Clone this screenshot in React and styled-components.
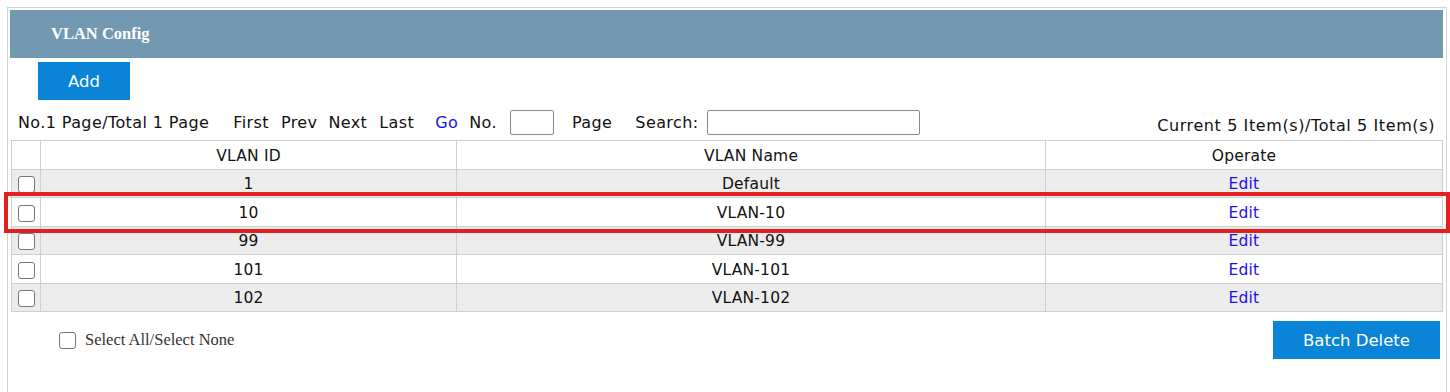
import React from "react";
import styled, { createGlobalStyle } from "styled-components";

const GlobalStyle = createGlobalStyle`
  html, body {
    margin: 0;
    padding: 0;
    background: #ffffff;
    font-family: "DejaVu Sans", Verdana, sans-serif;
  }
`;

const Page = styled.div`
  position: relative;
  width: 1450px;
  height: 392px;
  overflow: hidden;
`;

const Frame = styled.div`
  margin: 7px 0 0 7px;
  width: 1436px;
  height: 400px;
  border: 1px solid #d4d4d4;
  padding: 2px 0 0 2px;
  box-sizing: content-box;
`;

const TitleBar = styled.div`
  height: 48px;
  width: 1433px;
  background-color: #7298b2;
  display: flex;
  align-items: center;
  padding-left: 41px;
  box-sizing: border-box;
`;

const Title = styled.h2`
  margin: 0;
  font-family: "Liberation Serif", "Times New Roman", serif;
  font-size: 16.5px;
  font-weight: 700;
  color: #ffffff;
`;

const BlueButton = styled.button`
  width: ${(p) => p.$w}px;
  height: 38px;
  border: none;
  border-radius: 0;
  background-color: #0a84d6;
  color: #ffffff;
  font-family: "DejaVu Sans", Verdana, sans-serif;
  font-size: 16.5px;
  cursor: pointer;
  padding: 0;
`;

const AddRow = styled.div`
  padding: 4px 0 0 28px;
  display: flex;
`;

const Pager = styled.div`
  height: 40px;
  display: flex;
  align-items: center;
  justify-content: space-between;
  padding: 5px 8px 0 8px;
  width: 1433px;
  box-sizing: border-box;
  font-size: 16px;
  color: #111;
`;

const PagerLeft = styled.div`
  display: flex;
  align-items: center;
`;

const Item = styled.span`
  margin-left: ${(p) => p.$ml || 0}px;
  color: ${(p) => (p.$link ? "#1414e6" : "#111")};
  letter-spacing: 0.4px;
  white-space: nowrap;
`;

const TextBox = styled.input`
  margin-left: ${(p) => p.$ml || 0}px;
  width: ${(p) => p.$w}px;
  height: 25px;
  box-sizing: border-box;
  border: 1px solid #8a8a8a;
  border-radius: 2px;
  padding: 0 4px;
  font-size: 14px;
`;

const Counter = styled.span`
  margin-top: 5px;
  letter-spacing: 0.6px;
  white-space: nowrap;
`;

const Table = styled.table`
  margin-left: 1px;
  width: 1431px;
  border-collapse: collapse;
  table-layout: fixed;
  font-size: 15.5px;
  letter-spacing: 0.2px;
  color: #111;
`;

const Row = styled.tr`
  height: 28.5px;
  background-color: ${(p) => (p.$shade ? "#ececec" : "#ffffff")};
`;

const Cell = styled.td`
  border: 1px solid #cfcfcf;
  text-align: center;
  padding: 2px 0 0 0;
  vertical-align: middle;
  line-height: 18px;
`;

const HeadCell = styled(Cell).attrs({ as: "th" })`
  font-weight: 400;
`;

const EditLink = styled.a`
  color: #1f10e8;
  text-decoration: none;
  cursor: pointer;
`;

const Check = styled.input.attrs({ type: "checkbox" })`
  appearance: none;
  -webkit-appearance: none;
  width: 17px;
  height: 17px;
  margin: 0;
  border: 1.5px solid #777;
  border-radius: 3px;
  background: #fff;
  vertical-align: middle;
  display: inline-block;
`;

const Footer = styled.div`
  display: flex;
  justify-content: space-between;
  align-items: flex-start;
  width: 1433px;
  padding-right: 3px;
  box-sizing: border-box;
`;

const SelectAll = styled.label`
  margin: 18px 0 0 49px;
  display: flex;
  align-items: center;
  gap: 9px;
  font-family: "Liberation Serif", "Times New Roman", serif;
  font-size: 16.5px;
  color: #333;
`;

const FooterButtonWrap = styled.div`
  margin-top: 9px;
`;

const Highlight = styled.div`
  position: absolute;
  left: 4px;
  top: 192px;
  width: 1446px;
  height: 41px;
  border: 4px solid #e3201f;
  box-sizing: border-box;
  pointer-events: none;
`;

const rows = [
  { id: "1", name: "Default" },
  { id: "10", name: "VLAN-10" },
  { id: "99", name: "VLAN-99" },
  { id: "101", name: "VLAN-101" },
  { id: "102", name: "VLAN-102" },
];

export default function App() {
  return (
    <Page>
      <GlobalStyle />
      <Frame>
        <TitleBar>
          <Title>VLAN Config</Title>
        </TitleBar>
        <AddRow>
          <BlueButton $w={92}>Add</BlueButton>
        </AddRow>
        <Pager>
          <PagerLeft>
            <Item>No.1 Page/Total 1 Page</Item>
            <Item $ml={24}>First</Item>
            <Item $ml={12}>Prev</Item>
            <Item $ml={11}>Next</Item>
            <Item $ml={12}>Last</Item>
            <Item $ml={21} $link>Go</Item>
            <Item $ml={11}>No.</Item>
            <TextBox $ml={13} $w={44} />
            <Item $ml={18}>Page</Item>
            <Item $ml={23}>Search:</Item>
            <TextBox $ml={8} $w={213} />
          </PagerLeft>
          <Counter>Current 5 Item(s)/Total 5 Item(s)</Counter>
        </Pager>
        <Table>
          <colgroup>
            <col style={{ width: 29 }} />
            <col style={{ width: 416 }} />
            <col style={{ width: 589 }} />
            <col style={{ width: 397 }} />
          </colgroup>
          <thead>
            <Row>
              <HeadCell />
              <HeadCell>VLAN ID</HeadCell>
              <HeadCell>VLAN Name</HeadCell>
              <HeadCell>Operate</HeadCell>
            </Row>
          </thead>
          <tbody>
            {rows.map((r, i) => (
              <Row key={r.id} $shade={i % 2 === 0}>
                <Cell>
                  <Check />
                </Cell>
                <Cell>{r.id}</Cell>
                <Cell>{r.name}</Cell>
                <Cell>
                  <EditLink>Edit</EditLink>
                </Cell>
              </Row>
            ))}
          </tbody>
        </Table>
        <Footer>
          <SelectAll>
            <Check />
            Select All/Select None
          </SelectAll>
          <FooterButtonWrap>
            <BlueButton $w={167}>Batch Delete</BlueButton>
          </FooterButtonWrap>
        </Footer>
      </Frame>
      <Highlight />
    </Page>
  );
}
